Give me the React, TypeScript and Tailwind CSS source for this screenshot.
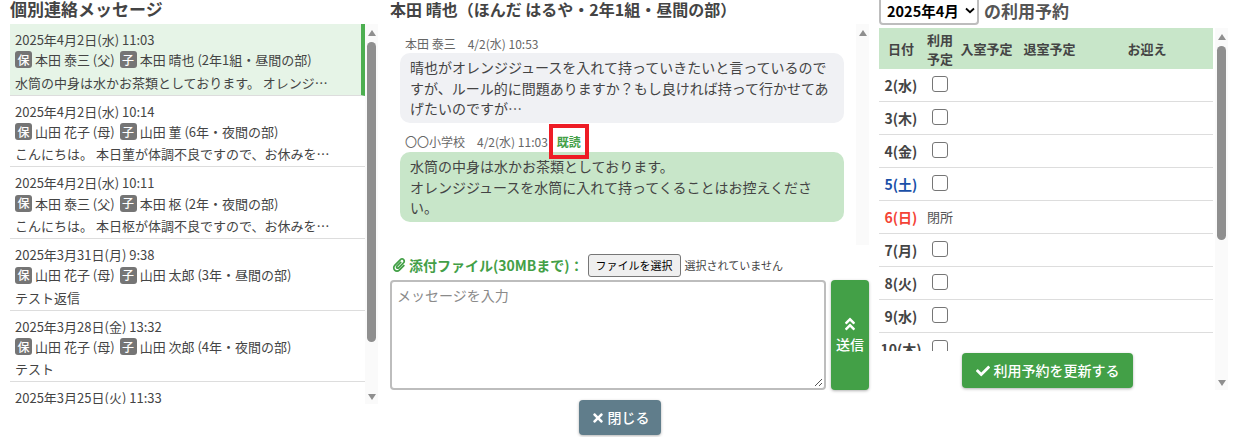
import { FaPaperclip, FaAngleDoubleUp, FaTimes, FaCheck } from "react-icons/fa"

const threads = [
  { date: "2025年4月2日(水) 11:03", parent: "本田 泰三 (父)", child: "本田 晴也 (2年1組・昼間の部)", body: "水筒の中身は水かお茶類としております。 オレンジジュースを水筒に入れて", active: true },
  { date: "2025年4月2日(水) 10:14", parent: "山田 花子 (母)", child: "山田 菫 (6年・夜間の部)", body: "こんにちは。 本日菫が体調不良ですので、お休みをいただきます。よろしく" },
  { date: "2025年4月2日(水) 10:11", parent: "本田 泰三 (父)", child: "本田 枢 (2年・夜間の部)", body: "こんにちは。 本日枢が体調不良ですので、お休みをいただきます。よろしく" },
  { date: "2025年3月31日(月) 9:38", parent: "山田 花子 (母)", child: "山田 太郎 (3年・昼間の部)", body: "テスト返信" },
  { date: "2025年3月28日(金) 13:32", parent: "山田 花子 (母)", child: "山田 次郎 (4年・夜間の部)", body: "テスト" },
  { date: "2025年3月25日(火) 11:33", parent: "山田 花子 (母)", child: "山田 次郎 (4年・夜間の部)", body: "テスト" },
]

const days = [
  { label: "2(水)", color: "text-[#444]" },
  { label: "3(木)", color: "text-[#444]" },
  { label: "4(金)", color: "text-[#444]" },
  { label: "5(土)", color: "text-[#1a50a8]" },
  { label: "6(日)", color: "text-[#f44336]", closed: true },
  { label: "7(月)", color: "text-[#444]" },
  { label: "8(火)", color: "text-[#444]" },
  { label: "9(水)", color: "text-[#444]" },
  { label: "10(木)", color: "text-[#444]" },
]

function Badge({ text }: { text: string }) {
  return (
    <span className="inline-flex items-center justify-center w-[17px] h-[17px] rounded-[3px] bg-[#757575] text-white text-[12px] leading-none font-medium mr-[3px]">
      {text}
    </span>
  )
}

// scrollbar drawn by hand so it always shows
function Scrollbar({ thumbHeight, noDown }: { thumbHeight: string; noDown?: boolean }) {
  return (
    <div className="flex flex-col items-center w-[13px] shrink-0 bg-[#fafafa]">
      <div className={`mt-[18px] w-[9px] bg-[#8f8f8f] rounded-[5px] relative ${thumbHeight}`}>
        <div className="absolute left-0 -top-[12px] w-0 h-0 ml-[0.5px] border-x-[4px] border-x-transparent border-b-[6px] border-b-[#8f8f8f]" />
      </div>
      {!noDown && <div className="mt-auto mb-[4px] w-0 h-0 border-x-[4px] border-x-transparent border-t-[6px] border-t-[#8f8f8f]" />}
    </div>
  )
}

function ThreadRow({ t }: { t: (typeof threads)[number] }) {
  return (
    <div className={`h-[71.7px] shrink-0 border-b border-[#ddd] pl-[5px] pr-[8px] pt-[5px] text-[13px] leading-[21.3px] text-[#444] ${t.active ? "bg-[#e6f4e7] border-r-[4px] border-r-[#4caf50]" : ""}`}>
      <div className="truncate">{t.date}</div>
      <div className="flex items-center whitespace-nowrap -mt-[1px] mb-[1px]">
        <Badge text="保" />
        <span className="mr-[5px]">{t.parent}</span>
        <Badge text="子" />
        <span>{t.child}</span>
      </div>
      <div className="truncate max-w-[316px]">{t.body}</div>
    </div>
  )
}

export default function App() {
  return (
    <div className="flex w-[1238px] h-[437px] overflow-hidden bg-white text-[#444] font-['Noto_Sans_CJK_JP',sans-serif]">
      {/* 連絡一覧 */}
      <section className="w-[368px] ml-[10px] shrink-0 flex flex-col">
        <h2 className="h-[24px] text-[17px] leading-[18px] font-bold text-[#444]">個別連絡メッセージ</h2>
        <div className="flex h-[380px]">
          <div className="flex-1 flex flex-col overflow-hidden">
            {threads.map((t) => (
              <ThreadRow key={t.date} t={t} />
            ))}
          </div>
          <Scrollbar thumbHeight="h-[300px]" />
        </div>
      </section>

      {/* やりとり */}
      <section className="w-[479px] ml-[12px] shrink-0 flex flex-col">
        <h2 className="h-[24px] text-[16px] leading-[18px] font-bold text-[#444] whitespace-nowrap">本田 晴也（ほんだ はるや・2年1組・昼間の部）</h2>
        <div className="flex h-[221px]">
          <div className="flex-1 pl-[10px] pr-[12px] pt-[11px] overflow-hidden">
            <div className="pl-[5px] h-[18px] text-[12px] leading-[18px] text-[#666]">本田 泰三　4/2(水) 10:53</div>
            <div className="h-[70px] rounded-[10px] bg-[#f0f1f4] px-[10px] py-[4px] text-[14px] leading-[20.5px]">
              晴也がオレンジジュースを入れて持っていきたいと言っているのですが、ルール的に問題ありますか？もし良ければ持って行かせてあげたいのですが…
            </div>
            <div className="pl-[5px] mt-[10px] h-[19px] text-[12px] leading-[18px] text-[#666]">
              〇〇小学校　4/2(水) 11:03
              <span className="relative ml-[9px] font-bold text-[#43a047]">
                既読
                <span className="absolute -left-[8px] -right-[8px] -top-[9px] -bottom-[9px] border-[4px] border-[#ee1c25]" />
              </span>
            </div>
            <div className="h-[70px] rounded-[10px] bg-[#c8e6c9] px-[10px] py-[4px] text-[14px] leading-[20.5px]">
              水筒の中身は水かお茶類としております。
              <br />
              オレンジジュースを水筒に入れて持ってくることはお控えください。
            </div>
          </div>
          <Scrollbar thumbHeight="h-0" noDown />
        </div>

        <div className="flex items-center h-[35px] pt-[5px] text-[14px] whitespace-nowrap">
          <FaPaperclip className="text-[#43a047] text-[14px] ml-[2px] mr-[3px]" />
          <span className="font-bold text-[#43a047]">添付ファイル(30MBまで)：</span>
          <button className="ml-[4px] h-[23px] w-[93px] rounded-[3px] border border-[#767676] bg-[#efefef] text-[11px] text-black">ファイルを選択</button>
          <span className="ml-[4px] text-[11px] text-[#444]">選択されていません</span>
        </div>

        <div className="flex gap-[5px] h-[110px]">
          <div className="relative flex-1 rounded-[4px] border-2 border-[#bdbdbd] bg-white pl-[5px] pt-[3px] text-[14px] text-[#8a8a8a]">
            メッセージを入力
            <svg className="absolute right-[1px] bottom-[1px]" width="9" height="9" viewBox="0 0 9 9">
              <path d="M1 8 8 1M5 8 8 5" stroke="#555" strokeWidth="1" />
            </svg>
          </div>
          <button className="w-[38px] rounded-[4px] bg-[#43a047] text-white text-[14px] font-medium flex flex-col items-center justify-center shadow-[0_1px_3px_rgba(0,0,0,0.3)]">
            <FaAngleDoubleUp className="text-[16px] mb-[2px]" />
            送信
          </button>
        </div>

        <div className="flex justify-center pt-[10px] pr-[19px]">
          <button className="flex items-center justify-center gap-[3px] w-[82px] h-[35px] rounded-[4px] bg-[#607d8b] text-white text-[14px] font-medium shadow-[0_1px_3px_rgba(0,0,0,0.3)]">
            <FaTimes className="text-[14px]" />
            閉じる
          </button>
        </div>
      </section>

      {/* 利用予約 */}
      <section className="w-[349px] ml-[10px] shrink-0 flex flex-col">
        <div className="flex items-center h-[29px] -mt-[4px] mb-[3px] text-[17px] font-bold">
          <div className="flex items-center w-[100px] h-[29px] rounded-[4px] border-2 border-[#bdbdbd] pl-[6px] text-black text-[14.5px]">
            2025年4月
            <svg className="ml-[6px]" width="10" height="7" viewBox="0 0 10 7">
              <path d="M1 1.5 5 5.2 9 1.5" fill="none" stroke="#000" strokeWidth="1.8" />
            </svg>
          </div>
          <span className="ml-[5px] text-[#555]">の利用予約</span>
        </div>
        <div className="relative flex h-[362px]">
          <div className="w-[334px] shrink-0 mr-[2px] flex flex-col">
            <div className="grid grid-cols-[44px_34px_59px_67px_128px] items-center h-[41px] shrink-0 bg-[#c8e6c9] text-[13px] font-bold text-center text-[#444]">
              <div>日付</div>
              <div className="leading-[19px]">利用<br />予定</div>
              <div>入室予定</div>
              <div>退室予定</div>
              <div>お迎え</div>
            </div>
            <div className="h-[282px] overflow-hidden">
              {days.map((d) => (
                <div key={d.label} className="grid grid-cols-[44px_34px] items-center h-[33px] border-b border-[#ddd] text-center">
                  <div className={`text-[14px] font-bold whitespace-nowrap ${d.color}`}>{d.label}</div>
                  {d.closed ? (
                    <div className="text-[13px] text-[#555]">閉所</div>
                  ) : (
                    <div className="mx-auto mb-[3px] w-[16px] h-[16px] rounded-[3px] border border-[#767676] bg-white" />
                  )}
                </div>
              ))}
            </div>
          </div>
          <Scrollbar thumbHeight="h-[194px]" />
          <button className="absolute left-[83px] top-[325px] flex items-center justify-center gap-[4px] w-[171px] h-[35px] rounded-[4px] bg-[#43a047] text-white text-[14px] font-medium shadow-[0_1px_3px_rgba(0,0,0,0.3)]">
            <FaCheck className="text-[14px]" />
            利用予約を更新する
          </button>
        </div>
      </section>
    </div>
  )
}
